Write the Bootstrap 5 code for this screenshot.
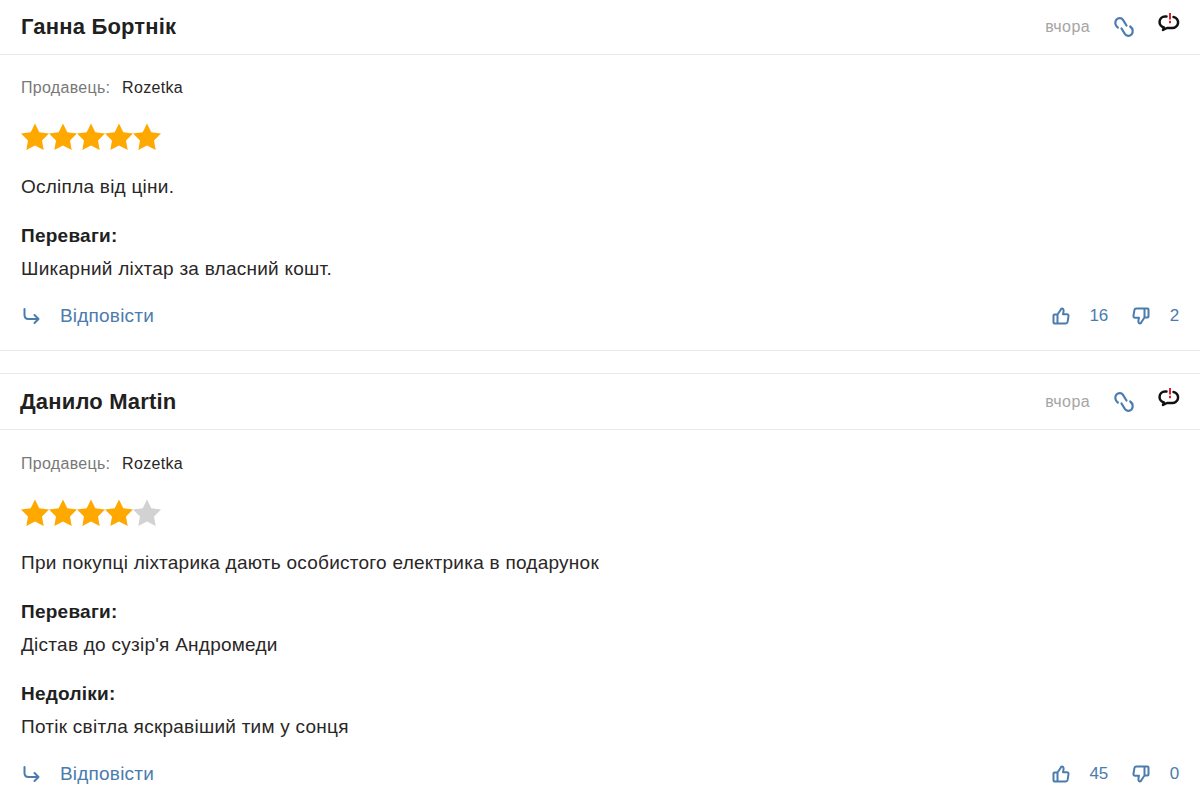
<!DOCTYPE html>
<html lang="uk">
<head>
<meta charset="utf-8">
<title>Відгуки</title>
<link href="https://cdn.jsdelivr.net/npm/bootstrap@5.3.0/dist/css/bootstrap.min.css" rel="stylesheet">
<style>
html,body{height:800px;overflow:hidden}
body{background:#fff;font-family:"Liberation Sans",Arial,sans-serif;color:#2a2727;margin:0}
.rv-item{border-bottom:1px solid #e9e9e9;height:351px}
.rv-item + .rv-item{border-top:1px solid #e9e9e9;border-bottom:0;margin-top:22px;height:auto}
.rv-head{height:55px;padding:0 21px;border-bottom:1px solid #e9e9e9}
.rv-item + .rv-item .rv-head{height:56px;padding-left:20px}
.rv-item + .rv-item .rv-body{padding-top:1px}
.rv-name{font-size:22px;letter-spacing:.18px;font-weight:700;line-height:24px;margin:0;color:#221f1f}
.rv-date{font-size:16px;letter-spacing:.4px;color:#a6a5a5}
.rv-body{padding:0 21px}
.rv-seller{font-size:16px;letter-spacing:.3px;line-height:20px;padding-top:23px;height:43px;color:#797878}
.rv-seller b{font-weight:400;color:#2a2727;margin-left:7px}
.rv-stars{margin-top:25px;height:28px}
.rv-stars svg{width:28px;height:28px;display:block}
.rv-text{font-size:19px;letter-spacing:.25px;line-height:24px;margin:0}
.rv-title{font-size:19px;letter-spacing:.25px;line-height:24px;font-weight:700;margin:0;color:#221f1f}
.rv-foot{color:#4b7cad;font-size:19px;letter-spacing:.2px;line-height:24px}
.rv-foot .num{font-size:17px;letter-spacing:-.3px;margin-left:20px}
.ico{display:block;flex:none}
.ico-reply{margin-left:2px}
.ico-link{margin-left:23px}
.ico-flag{margin-left:23px;margin-top:-6px;margin-right:-1px}
.ico-down{margin-left:24px}
.pad-a{margin-top:24px}
.pad-b{margin-top:25px}
.pad-c{margin-top:9px}
.pad-d{margin-top:23px}
.rv-reply{gap:19px}
</style>
</head>
<body>
<svg width="0" height="0" class="position-absolute" aria-hidden="true">
<defs>
<symbol id="star" viewBox="0 0 28 28"><path d="M14 .5 18.300 9.300 28 10.600 21 17.400 22.700 27 14 22.400 5.300 27 7 17.400 0 10.600 9.700 9.300z"/></symbol>
<symbol id="link" viewBox="0 0 22 22"><g fill="none" stroke="#4b7cad" stroke-width="2.200" stroke-linecap="round"><path d="M4.800 11.500C2 9.500 1.500 6 3.500 3.500 5.500 1.500 8.500 1.800 10 3.800L13.500 9.500"/><path d="M17.200 10.500C20 12.500 20.500 16 18.500 18.500 16.500 20.500 13.500 20.200 12 18.200L8.500 12.500"/></g></symbol>
<symbol id="flag" viewBox="0 0 22 22"><path d="M8.500 3.500H7A5.500 5.500 0 0 0 6 14.400L5 17l4-2h4.500A5.500 5.500 0 0 0 15.500 4" fill="none" stroke="#111" stroke-width="2.500" stroke-linecap="round" stroke-linejoin="round"/><path d="M12 0v6.500M12 7.800v2.400" stroke="#e0202a" stroke-width="2"/></symbol>
<symbol id="up" viewBox="0 0 18 18"><path d="M5.500 7.500 8.700 2.700c.3-1.500 2.700-1.600 2.900.5.1 1-.3 2.900-.6 4h3.900c1.200 0 1.800 1 1.600 2l-.9 5.700c-.2 1-.9 1.600-1.900 1.600H5.500zM2.500 7.500h3v9h-3a1 1 0 0 1-1-1v-7a1 1 0 0 1 1-1z" fill="none" stroke="#4b7cad" stroke-width="2" stroke-linejoin="round"/></symbol>
<symbol id="down" viewBox="0 0 18 18"><path d="M12.500 10.500 9.300 15.300c-.3 1.500-2.700 1.600-2.900-.5-.1-1 .3-2.900.6-4H3.100c-1.200 0-1.800-1-1.600-2l.9-5.700c.2-1 .9-1.600 1.900-1.600h8.200zM12.500 1.500h3a1 1 0 0 1 1 1v7a1 1 0 0 1-1 1h-3z" fill="none" stroke="#4b7cad" stroke-width="2" stroke-linejoin="round"/></symbol>
<symbol id="reply" viewBox="0 0 18 18"><path d="M1.500 2V8C1.500 10.500 3 12 5.500 12H15.500M11.500 8 15.500 12 11.500 16" fill="none" stroke="#4b7cad" stroke-width="2" stroke-linecap="round" stroke-linejoin="round"/></symbol>
</defs>
</svg>

<section class="rv-item">
  <header class="rv-head d-flex align-items-center justify-content-between">
    <h3 class="rv-name">Ганна Бортнік</h3>
    <div class="d-flex align-items-center">
      <span class="rv-date">вчора</span>
      <svg class="ico ico-link" width="22" height="22"><use href="#link"/></svg>
      <svg class="ico ico-flag" width="22" height="22"><use href="#flag"/></svg>
    </div>
  </header>
  <div class="rv-body">
    <div class="rv-seller">Продавець: <b>Rozetka</b></div>
    <div class="rv-stars d-flex">
      <svg fill="#ffa900"><use href="#star"/></svg><svg fill="#ffa900"><use href="#star"/></svg><svg fill="#ffa900"><use href="#star"/></svg><svg fill="#ffa900"><use href="#star"/></svg><svg fill="#ffa900"><use href="#star"/></svg>
    </div>
    <p class="rv-text pad-a">Осліпла від ціни.</p>
    <p class="rv-title pad-b">Переваги:</p>
    <p class="rv-text pad-c">Шикарний ліхтар за власний кошт.</p>
    <div class="rv-foot d-flex align-items-center justify-content-between pad-d">
      <div class="d-flex align-items-center rv-reply"><svg class="ico ico-reply" width="18" height="18"><use href="#reply"/></svg><span>Відповісти</span></div>
      <div class="d-flex align-items-center">
        <svg class="ico" width="18" height="18"><use href="#up"/></svg><span class="num">16</span>
        <svg class="ico ico-down" width="18" height="18"><use href="#down"/></svg><span class="num">2</span>
      </div>
    </div>
  </div>
</section>

<section class="rv-item">
  <header class="rv-head d-flex align-items-center justify-content-between">
    <h3 class="rv-name">Данило Martin</h3>
    <div class="d-flex align-items-center">
      <span class="rv-date">вчора</span>
      <svg class="ico ico-link" width="22" height="22"><use href="#link"/></svg>
      <svg class="ico ico-flag" width="22" height="22"><use href="#flag"/></svg>
    </div>
  </header>
  <div class="rv-body">
    <div class="rv-seller">Продавець: <b>Rozetka</b></div>
    <div class="rv-stars d-flex">
      <svg fill="#ffa900"><use href="#star"/></svg><svg fill="#ffa900"><use href="#star"/></svg><svg fill="#ffa900"><use href="#star"/></svg><svg fill="#ffa900"><use href="#star"/></svg><svg fill="#d2d2d2"><use href="#star"/></svg>
    </div>
    <p class="rv-text pad-a">При покупці ліхтарика дають особистого електрика в подарунок</p>
    <p class="rv-title pad-b">Переваги:</p>
    <p class="rv-text pad-c">Дістав до сузір'я Андромеди</p>
    <p class="rv-title pad-b">Недоліки:</p>
    <p class="rv-text pad-c">Потік світла яскравіший тим у сонця</p>
    <div class="rv-foot d-flex align-items-center justify-content-between pad-d">
      <div class="d-flex align-items-center rv-reply"><svg class="ico ico-reply" width="18" height="18"><use href="#reply"/></svg><span>Відповісти</span></div>
      <div class="d-flex align-items-center">
        <svg class="ico" width="18" height="18"><use href="#up"/></svg><span class="num">45</span>
        <svg class="ico ico-down" width="18" height="18"><use href="#down"/></svg><span class="num">0</span>
      </div>
    </div>
  </div>
</section>
</body>
</html>
